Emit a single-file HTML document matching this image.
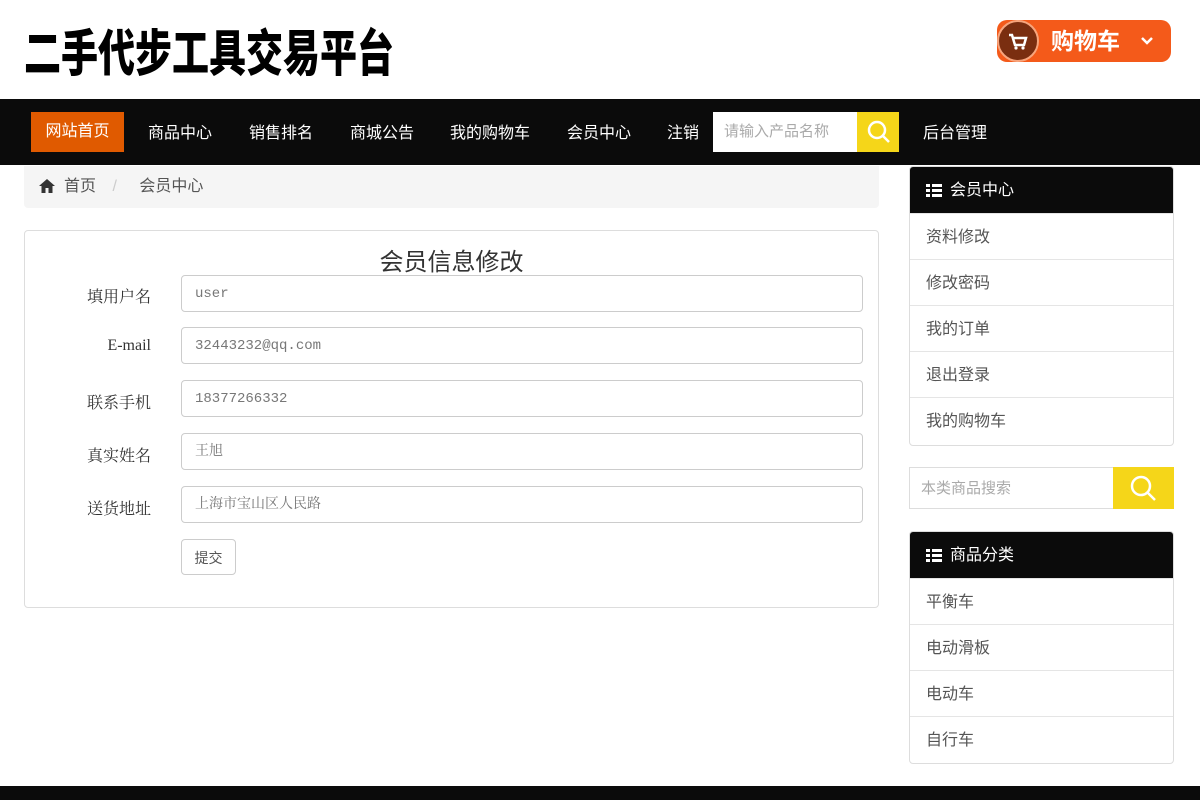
<!DOCTYPE html><html><head><meta charset="utf-8"><style>
*{box-sizing:border-box;margin:0;padding:0}
body{width:1200px;height:800px;overflow:hidden;background:#fff;font-family:"Liberation Sans","Noto Sans CJK SC",sans-serif;color:#333;position:relative}
.abs{position:absolute}
.logo{left:24px;top:20px;font-size:50px;font-weight:900;color:#000;line-height:60px;font-family:"Noto Sans CJK SC",sans-serif;transform:scaleX(0.74);transform-origin:left;white-space:nowrap}
.cart{left:997px;top:20px;width:174px;height:42px;background:#f45a1a;border-radius:10px;color:#fff;font-size:23px;font-weight:bold;line-height:42px;padding-left:54px}
.cart .c{position:absolute;left:0;top:0;width:42px;height:42px;border-radius:50%;background:#7a2e10;border:2px solid #f7a57d}
.nav{left:0;top:99px;width:1200px;height:66px;background:#0b0b0b}
.nav span{position:absolute;top:20px;color:#fff;font-size:16px}
.home{left:31px;top:112px;width:93px;height:40px;background:#e05a00;color:#fff;font-size:16px;line-height:40px;text-align:center}
.srch{left:713px;top:112px;width:144px;height:40px;background:#fff;color:#aaa;font-size:15px;line-height:40px;padding-left:11px}
.sbtn{left:857px;top:112px;width:42px;height:40px;background:#f5d619}
.bc{left:24px;top:166px;width:855px;height:42px;background:#f5f5f5;border-radius:0 0 4px 4px;font-size:16px;color:#555;line-height:42px;padding-left:40px}
.panel{left:24px;top:230px;width:855px;height:378px;border:1px solid #ddd;border-radius:4px}
.lbl{font-family:"Liberation Serif","Noto Serif CJK SC",serif;font-size:16px;color:#333;width:127px;text-align:right;left:24px}
.inp{left:181px;width:682px;height:37px;border:1px solid #ccc;border-radius:4px;font-family:"Liberation Mono","Noto Serif CJK SC",monospace;font-size:14px;color:#777;line-height:37px;padding-left:13px}
.side{left:909px;width:265px;border:1px solid #ddd;border-radius:4px;overflow:hidden}
.side .h{height:46px;background:#0b0b0b;color:#fff;font-size:16px;line-height:48px;padding-left:40px;position:relative}
.side .h i{position:absolute;left:16px;top:17px;width:16px;height:13px;background:repeating-linear-gradient(#fff 0 3px,#0b0b0b 3px 5px)}
.side .h i:after{content:"";position:absolute;left:4px;top:0;width:2px;height:13px;background:#0b0b0b}
.side .it{height:46px;border-top:1px solid #e5e5e5;font-size:16px;color:#555;line-height:48px;padding-left:16px}
</style></head><body>
<div class="abs logo">二手代步工具交易平台</div>
<div class="abs cart"><div class="c"><svg width="38" height="38" viewBox="0 0 38 38"><path d="M10 13h3l3 10h9l2-7H14" fill="none" stroke="#fff" stroke-width="2.5"/><circle cx="17" cy="26" r="1.6" fill="#fff"/><circle cx="24" cy="26" r="1.6" fill="#fff"/></svg></div>购物车<svg class="abs" style="left:143px;top:15px" width="14" height="12"><path d="M2 3l5 5 5-5" fill="none" stroke="#fff" stroke-width="2.5"/></svg></div>
<div class="abs nav"><span style="left:148px">商品中心</span><span style="left:249px">销售排名</span><span style="left:350px">商城公告</span><span style="left:450px">我的购物车</span><span style="left:567px">会员中心</span><span style="left:667px">注销</span><span style="left:923px">后台管理</span></div>
<div class="abs home">网站首页</div>
<div class="abs srch">请输入产品名称</div>
<div class="abs sbtn"><svg width="42" height="40"><circle cx="20" cy="18" r="8" fill="none" stroke="#fff" stroke-width="2.5"/><path d="M26 24l6 6" stroke="#fff" stroke-width="2.5"/></svg></div>
<div class="abs bc"><svg class="abs" style="left:14px;top:12px" width="18" height="16"><path d="M9 1L1 8h2.5v7h4v-5h3v5h4V8H17z" fill="#333"/></svg>首页 <span style="color:#ccc;margin:0 18px 0 12px">/</span> 会员中心</div>
<div class="abs panel"></div>
<div class="abs" style="left:24px;width:855px;top:242px;text-align:center;font-size:24px;color:#333">会员信息修改</div>
<div class="abs lbl" style="top:284px">填用户名</div><div class="abs inp" style="top:275px">user</div>
<div class="abs lbl" style="top:337px">E-mail</div><div class="abs inp" style="top:327px">32443232@qq.com</div>
<div class="abs lbl" style="top:390px">联系手机</div><div class="abs inp" style="top:380px">18377266332</div>
<div class="abs lbl" style="top:443px">真实姓名</div><div class="abs inp" style="top:433px">王旭</div>
<div class="abs lbl" style="top:496px">送货地址</div><div class="abs inp" style="top:486px">上海市宝山区人民路</div>
<div class="abs" style="left:181px;top:539px;width:55px;height:36px;border:1px solid #ccc;border-radius:4px;font-size:14px;color:#555;line-height:36px;text-align:center">提交</div>
<div class="abs side" style="top:166px;height:280px"><div class="h"><i></i>会员中心</div><div class="it">资料修改</div><div class="it">修改密码</div><div class="it">我的订单</div><div class="it">退出登录</div><div class="it">我的购物车</div></div>
<div class="abs" style="left:909px;top:467px;width:265px;height:42px;border:1px solid #ddd;font-size:15px;color:#aaa;line-height:42px;padding-left:11px">本类商品搜索</div>
<div class="abs" style="left:1113px;top:467px;width:61px;height:42px;background:#f5d619"><svg width="61" height="42"><circle cx="28" cy="19" r="9" fill="none" stroke="#fff" stroke-width="2.5"/><path d="M35 26l7 7" stroke="#fff" stroke-width="2.5"/></svg></div>
<div class="abs side" style="top:531px;height:233px"><div class="h"><i></i>商品分类</div><div class="it">平衡车</div><div class="it">电动滑板</div><div class="it">电动车</div><div class="it">自行车</div></div>
<div class="abs" style="left:0;top:786px;width:1200px;height:14px;background:#0b0b0b"></div>
</body></html>
